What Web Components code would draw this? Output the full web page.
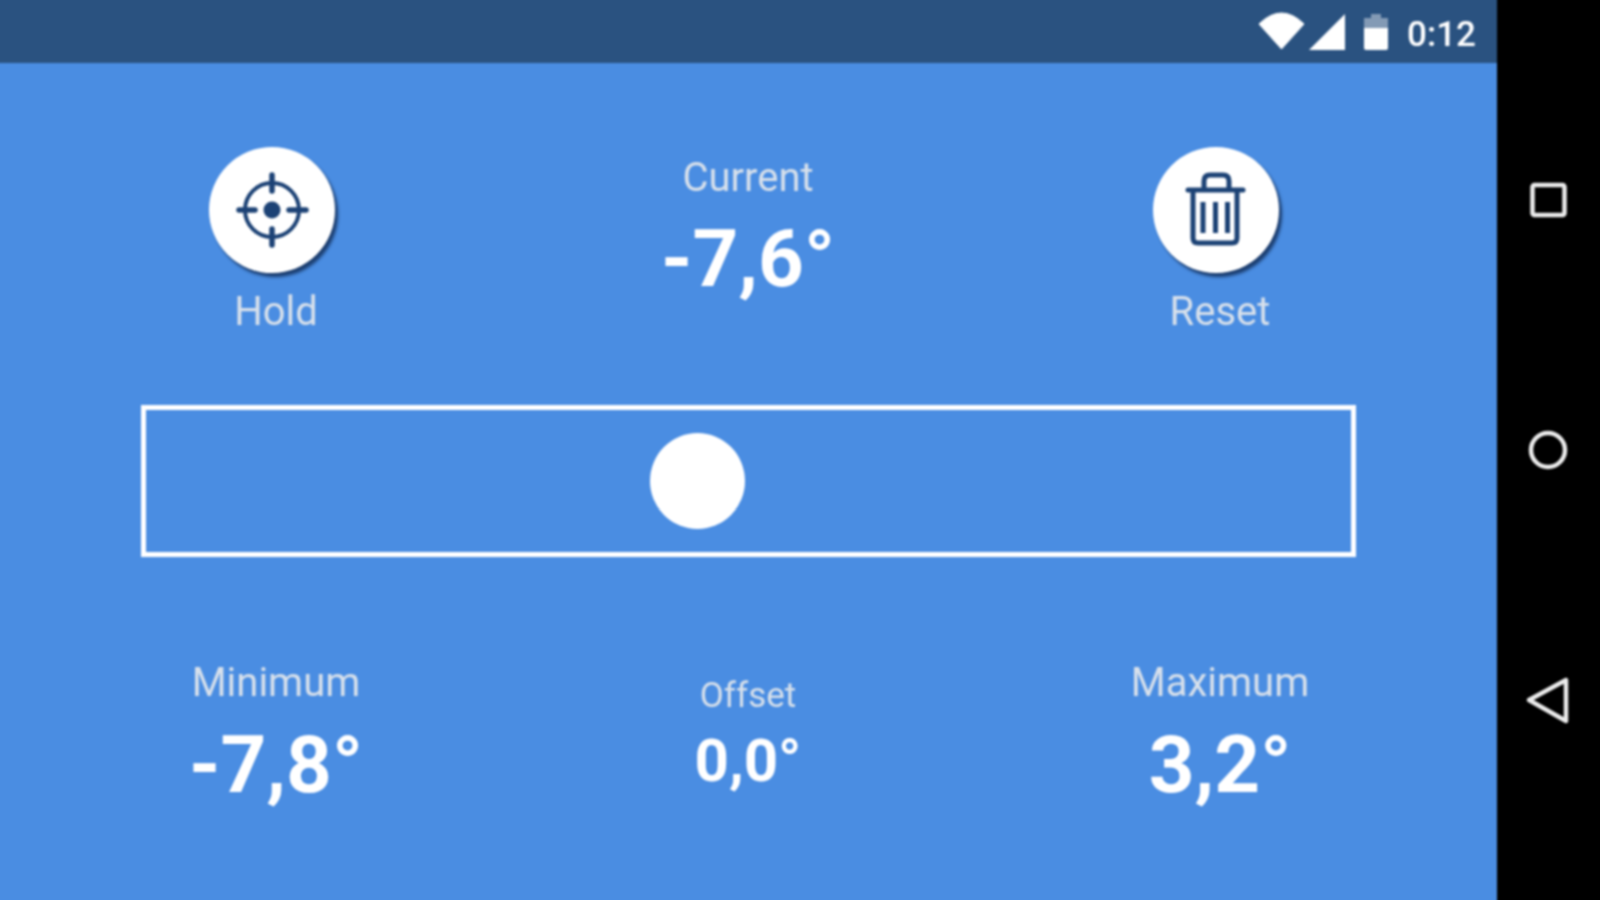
<!DOCTYPE html>
<html lang="en">
<head>
  <meta charset="UTF-8">
  <title>Inclinometer</title>
  <style>
    html, body { margin: 0; height: 100%; background: #000; }
    body { font-family: Roboto, "Liberation Sans", sans-serif; overflow: hidden; }
  </style>
</head>
<body>
  <level-app>
    <status-bar slot="status" time="0:12"></status-bar>
    <div slot="top" style="display:contents">
      <round-button label="Hold" icon="target"></round-button>
      <angle-readout label="Current" value="-7,6°" size="large" class="current"></angle-readout>
      <round-button label="Reset" icon="trash"></round-button>
    </div>
    <level-bar slot="bar" offset="509"></level-bar>
    <div slot="bottom" style="display:contents">
      <angle-readout label="Minimum" value="-7,8°" size="large"></angle-readout>
      <angle-readout label="Offset" value="0,0°" size="small"></angle-readout>
      <angle-readout label="Maximum" value="3,2°" size="large"></angle-readout>
    </div>
    <nav-bar slot="nav"></nav-bar>
  </level-app>

  <script>
    (function() {
      // host bleeds 10px past the window so the blur has no dark rim at the edges
      class LevelApp extends HTMLElement {
        constructor() {
          super();
          this.attachShadow({mode: 'open'});
          this.shadowRoot.innerHTML = `
            <style>
              :host { display: flex; width: 1620px; height: 920px; margin: -10px; filter: blur(.9px); }
              .screen { width: 1507px; background: #4a8de2; display: flex; flex-direction: column; }
              .row { display: grid; grid-template-columns: repeat(3, 472px); padding-left: 50px; }
              .top { padding-top: 84px; height: 258px; box-sizing: content-box; }
              .bar { padding: 0 141px 0 151px; }
              .bottom { padding-top: 104px; }
            </style>
            <div class="screen">
              <slot name="status"></slot>
              <div class="row top"><slot name="top"></slot></div>
              <div class="bar"><slot name="bar"></slot></div>
              <div class="row bottom"><slot name="bottom"></slot></div>
            </div>
            <slot name="nav"></slot>`;
        }
      }

      class StatusBar extends HTMLElement {
        constructor() {
          super();
          this.attachShadow({mode: 'open'});
          this.shadowRoot.innerHTML = `
            <style>
              :host { display: flex; box-sizing: border-box; height: 73px; padding: 10px 21px 0 0; background: #2a5280; align-items: center; justify-content: flex-end; color: #fff; }
              svg { display: block; }
              .time { font: 500 35px/1 Roboto, sans-serif; margin-left: 19px; padding-top: 6px; }
            </style>
            <svg width="130" height="63" viewBox="0 0 130 63">
              <path d="M1 24 Q23.500 2 46 24 L23.500 49 Z" fill="#fff" stroke="#fff" stroke-width="1" stroke-linejoin="round"/>
              <path d="M51 50 L87 14 V50 Z" fill="#fff"/>
              <path d="M106 18 h7 v-4 h10 v4 h7 v10 h-24 Z" fill="#fff" opacity=".42"/>
              <path d="M106 28 h24 v20 q0 2 -2 2 h-20 q-2 0 -2 -2 Z" fill="#fff"/>
            </svg>
            <span class="time"></span>`;
          this.shadowRoot.querySelector('.time').textContent = this.getAttribute('time');
        }
      }

      const ICONS = {
        target: `
          <g fill="none" stroke="#1c4275" stroke-width="4">
            <circle cx="63" cy="63" r="27"/>
            <path d="M30 63 H46 M80 63 H97 M63 28 V44 M63 82 V98" stroke-width="5.500" stroke-linecap="round"/>
          </g>
          <circle cx="63" cy="63" r="8.500" fill="#1c4275"/>`,
        trash: `
          <g fill="none" stroke="#1c4275" stroke-width="5" stroke-linecap="round" stroke-linejoin="round">
            <path d="M35 43 H90"/>
            <path d="M51 41 V34 Q51 28 57 28 H70 Q76 28 76 34 V41"/>
            <path d="M40 45 V91 Q40 96 45 96 H79 Q84 96 84 91 V45"/>
          </g>
          <path d="M47.500 55 h5 v31 h-5 Z M60 55 h5 v31 h-5 Z M72 55 h5 v31 h-5 Z" fill="#1c4275"/>`
      };

      class RoundButton extends HTMLElement {
        constructor() {
          super();
          this.attachShadow({mode: 'open'});
          this.shadowRoot.innerHTML = `
            <style>
              :host { display: flex; flex-direction: column; align-items: center; }
              .disc { width: 126px; height: 126px; border-radius: 50%; background: #fff; box-shadow: 3px 4px 3px rgba(16, 42, 84, .8); margin-right: 9px; }
              svg { display: block; }
              .label { font: 400 40px/44px Roboto, sans-serif; color: #d7e0eb; margin-top: 17px; }
            </style>
            <div class="disc"><svg width="126" height="126" viewBox="0 0 126 126">${ICONS[this.getAttribute('icon')]}</svg></div>
            <div class="label"></div>`;
          this.shadowRoot.querySelector('.label').textContent = this.getAttribute('label');
        }
      }

      class AngleReadout extends HTMLElement {
        constructor() {
          super();
          this.attachShadow({mode: 'open'});
          this.shadowRoot.innerHTML = `
            <style>
              :host { display: flex; flex-direction: column; align-items: center; }
              .label { font: 400 40px/44px Roboto, sans-serif; color: #d7e0eb; }
              .value { font: 700 80px/94px Roboto, sans-serif; color: #fff; margin-top: 13px; }
              :host([size="small"]) { padding-top: 15px; }
              :host([size="small"]) .label { font-size: 35px; line-height: 40px; }
              :host([size="small"]) .value { font-size: 60px; line-height: 72px; margin-top: 9px; }
              :host(.current) { padding-top: 9px; }
              :host(.current) .value { margin-top: 12px; }
            </style>
            <div class="label"></div>
            <div class="value"></div>`;
          this.shadowRoot.querySelector('.label').textContent = this.getAttribute('label');
          this.shadowRoot.querySelector('.value').textContent = this.getAttribute('value');
        }
      }

      class LevelBar extends HTMLElement {
        constructor() {
          super();
          this.attachShadow({mode: 'open'});
          this.shadowRoot.innerHTML = `
            <style>
              :host { display: flex; align-items: center; box-sizing: border-box; height: 152px; border: 5px solid #fff; }
              .thumb { width: 95px; height: 96px; border-radius: 50%; background: #fff; }
            </style>
            <div class="thumb"></div>`;
          this.shadowRoot.querySelector('.thumb').style.marginLeft = this.getAttribute('offset') - 5 + 'px';
        }
      }

      class NavBar extends HTMLElement {
        constructor() {
          super();
          this.attachShadow({mode: 'open'});
          this.shadowRoot.innerHTML = `
            <style>
              :host { display: flex; flex-direction: column; align-items: center; width: 113px; background: #000; padding: 186px 10px 0 0; box-sizing: border-box; gap: 202px; }
              svg { display: block; fill: none; stroke: #ececec; stroke-width: 4.500; stroke-linejoin: round; }
            </style>
            <svg width="48" height="48" viewBox="0 0 48 48"><rect x="7.500" y="9" width="32" height="30" rx="2"/></svg>
            <svg width="48" height="48" viewBox="0 0 48 48"><circle cx="23" cy="24" r="17"/></svg>
            <svg width="48" height="48" viewBox="0 0 48 48"><path d="M4 24 L41 4 V45 Z"/></svg>`;
        }
      }

      customElements.define('level-app', LevelApp);
      customElements.define('status-bar', StatusBar);
      customElements.define('round-button', RoundButton);
      customElements.define('angle-readout', AngleReadout);
      customElements.define('level-bar', LevelBar);
      customElements.define('nav-bar', NavBar);
    })()
  </script>
</body>
</html>
